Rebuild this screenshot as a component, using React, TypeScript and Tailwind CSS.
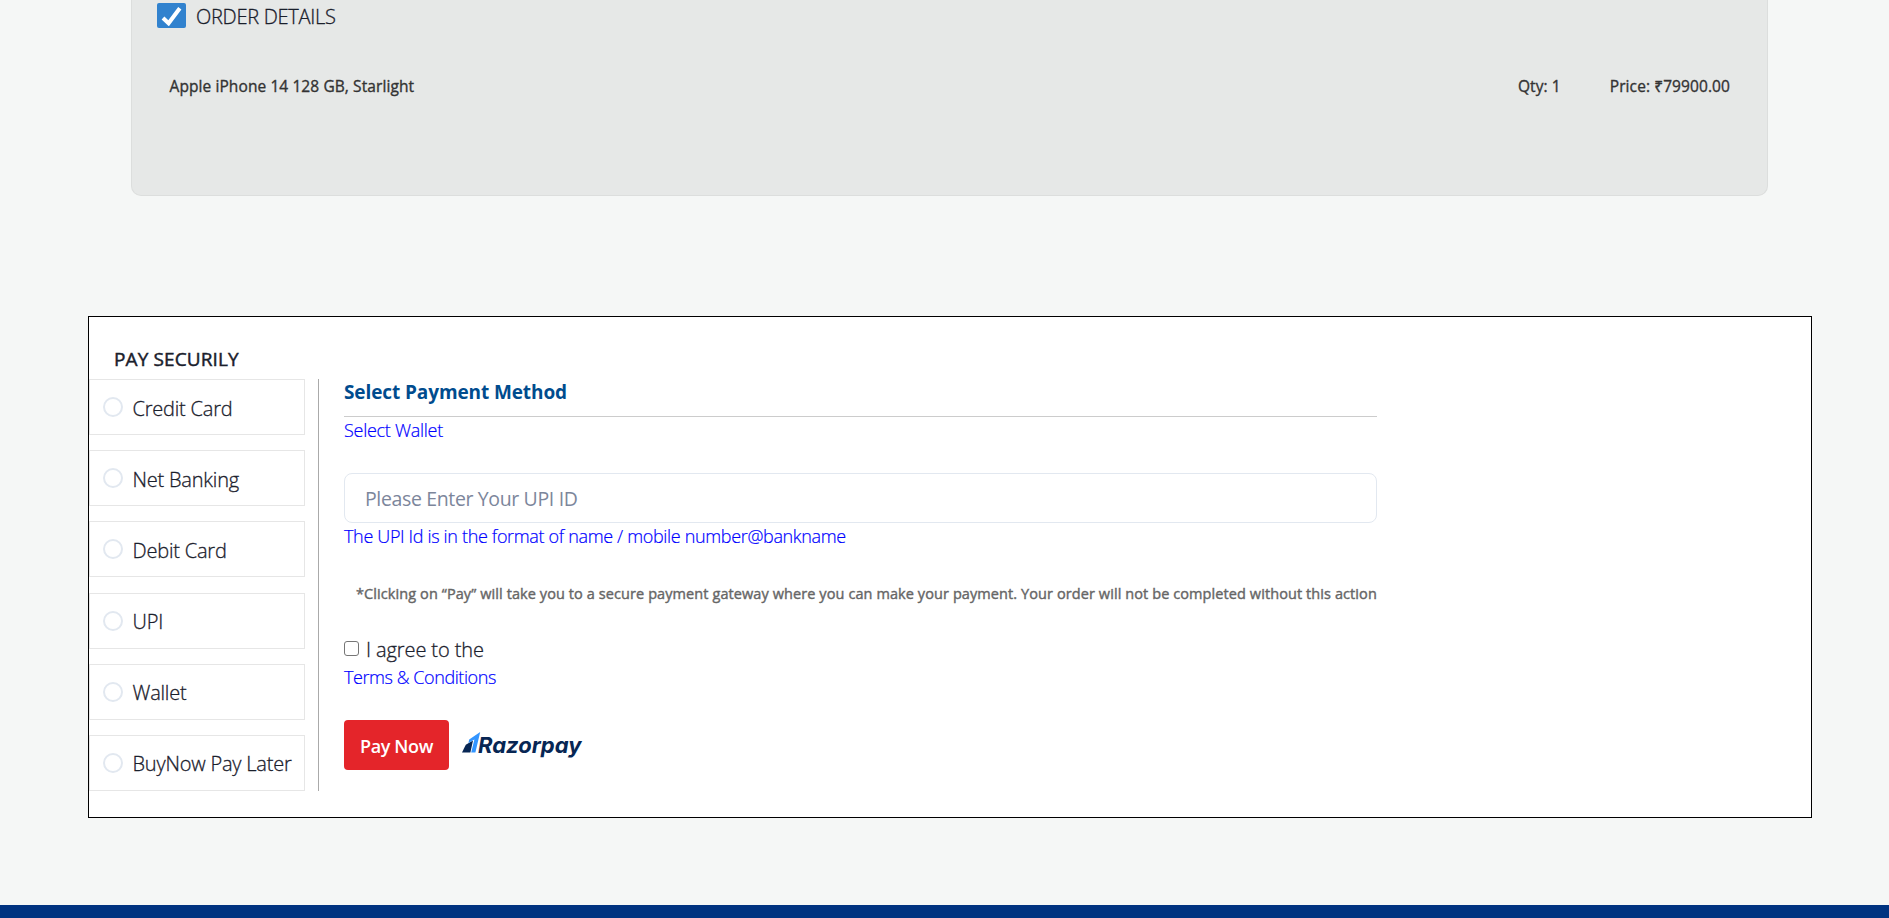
const methods = ["Credit Card", "Net Banking", "Debit Card", "UPI", "Wallet", "BuyNow Pay Later"];

function RazorpayLogo() {
  return (
    <svg width="122" height="28" viewBox="0 0 122 28" className="shrink-0">
      <path d="M3.8 12.8 11 8.5 8.4 20.5H0Z" fill="#072654" />
      <path d="M7.2 7.4 18.2 0 13.4 20.5H9.2L12.4 7.4 6.4 11Z" fill="#3395ff" />
      <text x="16" y="20.5" fill="#072654" fontFamily="Inter, sans-serif" fontSize="22" fontWeight="700" fontStyle="italic" textLength="103.5" lengthAdjust="spacingAndGlyphs">
        Razorpay
      </text>
    </svg>
  );
}

export default function App() {
  return (
    <div className="flex h-[918px] w-full flex-col overflow-hidden bg-[#f5f7f6] font-['Open_Sans','Noto_Sans',sans-serif] whitespace-nowrap text-[#1a202c]">
      <section className="ml-[131px] h-[196px] w-[1637px] shrink-0 rounded-b-[10px] border border-t-0 border-[#dcdedd] bg-[#e6e8e7]">
        <div className="flex pt-[3px] pl-[25px]">
          <span className="flex h-[25px] w-[29px] items-center justify-center rounded-[2px] bg-[#3182ce]">
            <svg width="21" height="20" viewBox="0 0 21 20" fill="none">
              <path d="M2 12 7.6 17.3 18.8 2.3" stroke="white" strokeWidth="4" />
            </svg>
          </span>
          <span className="ml-[10px] h-[28px] text-[20px] leading-[28px] font-light tracking-[-0.28px] [-webkit-text-stroke:0.3px]">ORDER DETAILS</span>
        </div>
        <div className="mt-[43px] flex pr-[37px] pl-[37.5px] text-[15.5px] leading-[24px] tracking-[0.09px] text-[#333] [-webkit-text-stroke:0.35px]">
          <span>Apple iPhone 14 128 GB, Starlight</span>
          <span className="ml-auto">Qty: 1</span>
          <span className="ml-[49px]">Price: ₹79900.00</span>
        </div>
      </section>

      <section className="mt-[120px] ml-[88px] h-[502px] w-[1724px] shrink-0 border border-black bg-white">
        <h2 className="mt-[28px] ml-[25px] h-[34px] text-[19px] leading-[28px] tracking-[0.12px] [-webkit-text-stroke:0.45px]">PAY SECURILY</h2>
        <div className="flex h-[412px]">
          <div className="flex w-[216px] flex-col justify-between">
            {methods.map((name) => (
              <label key={name} className="flex h-[56px] items-center border border-[#e6e6e6] pl-[13px]">
                <span className="size-5 rounded-full border-2 border-[#e2e8f0]" />
                <span className="ml-[9.5px] pt-[3px] text-[20px] leading-[28px] font-light tracking-[-0.2px] [-webkit-text-stroke:0.3px]">{name}</span>
              </label>
            ))}
          </div>
          <div className="ml-[13px] w-px bg-[#aaa]" />
          <div className="ml-[25px] flex w-[1033px] flex-col">
            <h3 className="h-[38px] border-b border-[#ccc] text-[19px] leading-[26px] font-bold tracking-[-0.1px] text-[#004c8e]">
              <span>Select Payment Method</span>
            </h3>
            <div className="h-[56px] text-[18px] leading-[27px] font-light tracking-[-0.28px] text-[#0000ff] [-webkit-text-stroke:0.2px]">
              <span>Select Wallet</span>
            </div>
            <div className="flex h-[50px] items-center rounded-[8px] border border-[#e2e8f0] pt-[2px] pl-[20px] text-[19.5px] tracking-[-0.36px] text-[#718096]">
              <input className="w-full outline-none placeholder:text-[#7c869b]" placeholder="Please Enter Your UPI ID" />
            </div>
            <div className="text-[18px] leading-[27px] font-light tracking-[-0.34px] text-[#0000ff] [-webkit-text-stroke:0.2px]">
              <span>The UPI Id is in the format of name / mobile number@bankname</span>
            </div>
            <p className="mt-[32px] ml-[12px] text-[14.5px] leading-[24px] tracking-[0.09px] text-[#666] [-webkit-text-stroke:0.4px]">
              *Clicking on “Pay” will take you to a secure payment gateway where you can make your payment. Your order will not be completed without this action
            </p>
            <div className="mt-[30px] flex h-[28px]">
              <span className="mt-[5px] size-[15px] rounded-[3px] border border-[#767676]" />
              <span className="ml-[7px] text-[20px] leading-[28px] font-light tracking-[-0.1px] [-webkit-text-stroke:0.3px]">I agree to the</span>
            </div>
            <a className="h-[28px] text-[18px] leading-[26px] font-light tracking-[-0.43px] text-[#0000ff] [-webkit-text-stroke:0.2px]">Terms &amp; Conditions</a>
            <div className="mt-[28px] flex">
              <button className="h-[50px] w-[105px] rounded-[4px] bg-[#e4252a] pt-[3px] text-[18px] font-semibold tracking-[-0.38px] text-white">Pay Now</button>
              <div className="mt-[12px] ml-[12.5px]">
                <RazorpayLogo />
              </div>
            </div>
          </div>
        </div>
      </section>
      <footer className="mt-[87px] h-[13px] shrink-0 bg-[#003380]" />
    </div>
  );
}
